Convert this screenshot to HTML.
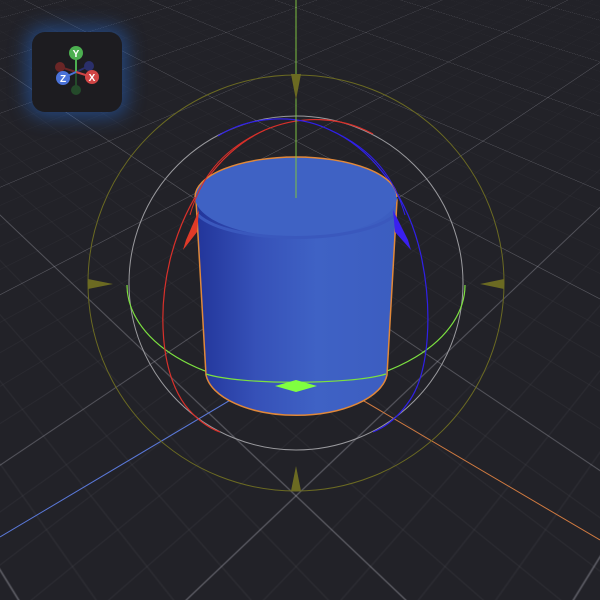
<!DOCTYPE html>
<html><head><style>
html,body{margin:0;padding:0;background:#222228;width:600px;height:600px;overflow:hidden;position:relative}
#persp{position:absolute;left:0;top:0;width:600px;height:600px;perspective:700px;perspective-origin:296px 150px;overflow:hidden}
#plane{position:absolute;left:-1204px;top:-1139px;width:3000px;height:3000px;
transform:rotateX(58deg) rotateZ(45deg);transform-origin:1500px 1500px;
background-image:
linear-gradient(rgba(200,200,210,.32) 1.5px,transparent 1.5px),
linear-gradient(90deg,rgba(200,200,210,.32) 1.5px,transparent 1.5px),
linear-gradient(rgba(160,160,170,.07) 1px,transparent 1px),
linear-gradient(90deg,rgba(160,160,170,.07) 1px,transparent 1px);
background-size:200px 200px,200px 200px,40px 40px,40px 40px;background-position:0 0}
svg{position:absolute;left:0;top:0}
#giz{position:absolute;left:32px;top:32px;width:90px;height:80px;border-radius:13px;background:#1d1c20;box-shadow:0 0 18px 6px rgba(40,110,220,.45)}
</style></head><body>
<div id="persp"><div id="plane"></div></div>
<svg width="600" height="600" viewBox="0 0 600 600">
<defs>
<linearGradient id="body" x1="0" x2="1" y1="0" y2="0">
<stop offset="0" stop-color="#22359a"/><stop offset=".3" stop-color="#3651b8"/><stop offset=".6" stop-color="#3f62c5"/><stop offset="1" stop-color="#3c5dc0"/>
</linearGradient>
</defs>
<line x1="0" y1="537" x2="296" y2="361" stroke="#5a78d8" stroke-width="1"/>
<line x1="296" y1="361" x2="600" y2="540" stroke="#d07a40" stroke-width="1"/>
<circle cx="296" cy="283" r="208" fill="none" stroke="#6b6a22" stroke-width="1"/>
<circle cx="296" cy="283" r="167" fill="none" stroke="#9a9a9e" stroke-width="1"/>
<path d="M127,285 A169,102 0 0 0 465,285" fill="none" stroke="#7ce040" stroke-width="1.2"/>
<path d="M373,134 C340,116 300,115 265,130 C220,150 185,200 170,260 C158,310 160,370 185,405 C195,418 208,428 220,432" fill="none" stroke="#d8302a" stroke-width="1.2"/>
<path d="M218,136 C250,116 295,113 330,130 C375,150 410,200 422,260 C432,310 430,370 410,400 C400,415 388,426 373,432" fill="none" stroke="#3020e8" stroke-width="1.2"/>
<path d="M196,200 L206,375 A91,45 0 0 0 387,375 L397,200 Z" fill="url(#body)" stroke="#e0883a" stroke-width="1.5"/>
<ellipse cx="296" cy="197" rx="101" ry="40" fill="#3f62c4"/>
<path d="M195,197 A101,40 0 0 1 397,197" fill="none" stroke="#e0883a" stroke-width="1.5"/>
<path d="M198,215 C230,245 360,245 395,215" fill="none" stroke="#3a58bd" stroke-width="3"/>
<path d="M206,374 C240,385 350,385 386,374" fill="none" stroke="#7ce040" stroke-width="1.2"/>
<path d="M265,130 C220,150 200,180 190,215" fill="none" stroke="#d8302a" stroke-width="1"/>
<path d="M330,130 C375,150 395,180 405,215" fill="none" stroke="#3020e8" stroke-width="1"/>
<line x1="296" y1="0" x2="296" y2="198" stroke="#7cc040" stroke-width="1"/>
<polygon points="199,210 186,240 183,250 197,232" fill="#e03a28"/>
<polygon points="393,210 408,240 411,250 395,232" fill="#3a20f0"/>
<polygon points="275,386 296,380 317,386 296,392" fill="#80ff40"/>
<g fill="#6b6a22">
<polygon points="291,74 301,74 296,100"/><polygon points="88,279 88,289 113,284"/>
<polygon points="504,279 504,289 480,284"/><polygon points="291,491 301,491 296,466"/>
</g>
</svg>
<div id="giz"></div>
<svg width="600" height="600">
<g stroke-width="2">
<line x1="76" y1="72" x2="60" y2="67" stroke="#6a2626"/>
<line x1="76" y1="72" x2="89" y2="66" stroke="#2a2f6a"/>
<line x1="76" y1="72" x2="76" y2="90" stroke="#244a2a"/>
<line x1="76" y1="72" x2="76" y2="53" stroke="#4caf50"/>
<line x1="76" y1="72" x2="92" y2="77" stroke="#d04545"/>
<line x1="76" y1="72" x2="63" y2="78" stroke="#4a72d8"/>
</g>
<circle cx="60" cy="67" r="5" fill="#6a2626"/>
<circle cx="89" cy="66" r="5" fill="#2a2f6a"/>
<circle cx="76" cy="90" r="5" fill="#244a2a"/>
<circle cx="76" cy="53" r="7" fill="#4caf50"/>
<circle cx="92" cy="77" r="7" fill="#d04545"/>
<circle cx="63" cy="78" r="7" fill="#4a72d8"/>
<g font-family="Liberation Sans,sans-serif" font-weight="bold" font-size="10" fill="#fff" text-anchor="middle">
<text x="76" y="57">Y</text><text x="92" y="81">X</text><text x="63" y="82">Z</text>
</g>
</svg>
</body></html>
